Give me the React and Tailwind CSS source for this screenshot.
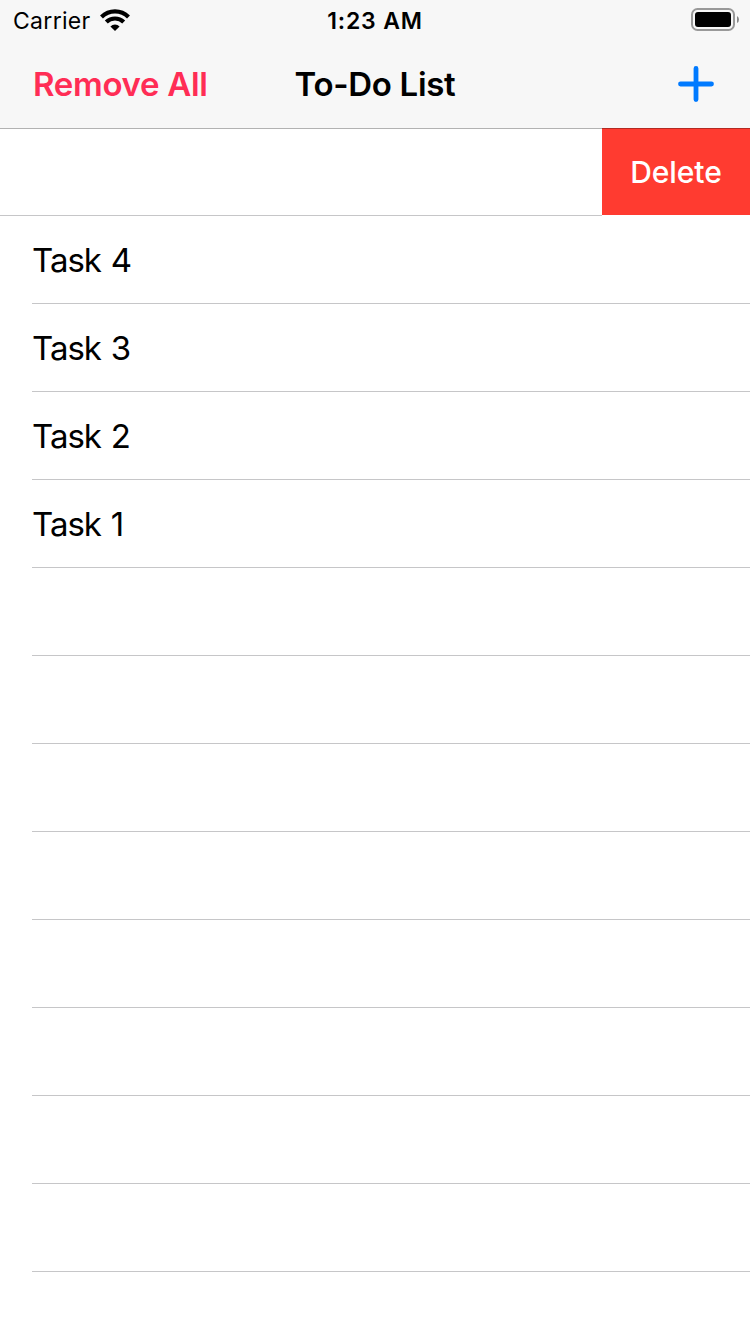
const tasks = ['Task 4', 'Task 3', 'Task 2', 'Task 1', '', '', '', '', '', '', '', ''];

export default function App() {
  return (
    <div className="flex h-[1334px] w-[750px] flex-col overflow-hidden bg-white font-['Inter',sans-serif] text-black">
      <header className="flex h-32 shrink-0 flex-col bg-[#f7f7f7]">
        <div className="grid h-10 grid-cols-3 items-center text-[23px] leading-[38px]">
          <div className="flex items-center pl-[13px]">
            <span className="pt-0.5 tracking-[0.3px]">Carrier</span>
            <svg className="ml-[9px] h-[22px] w-[30px]" viewBox="0 0 30 22" fill="none" stroke="black" strokeWidth="4.2">
              <path d="M1.500 7.900a19.500 19.500 0 0 1 27 0M6.300 13a12.500 12.500 0 0 1 17.400 0" />
              <path d="M15 22l-4.600-4.600a6.800 6.800 0 0 1 9.200 0z" fill="black" stroke="none" />
            </svg>
          </div>
          <span className="pt-0.5 text-center font-[560] tracking-[0.8px]">1:23 AM</span>
          <div className="flex justify-end pr-[11px]">
            <svg className="h-6 w-12" viewBox="0 0 48 24">
              <rect x="1" y="1" width="42" height="21" rx="5.500" fill="none" stroke="#999" strokeWidth="2" />
              <rect x="4" y="4" width="36" height="15" rx="3" />
              <path d="M46 8q2 1 2 3.500t-2 3.500z" fill="#888" />
            </svg>
          </div>
        </div>
        <div className="grid flex-1 grid-cols-3 items-center text-[33px] font-[590] tracking-[-0.3px]">
          <span className="pt-0.5 pl-[33px] text-[#ff2d55]">Remove All</span>
          <span className="pt-0.5 text-center">To-Do List</span>
          <div className="flex justify-end pr-9">
            <svg className="h-9 w-9" viewBox="0 0 36 36" stroke="#007aff" strokeWidth="4.8" strokeLinecap="round">
              <path d="M18 2.500v31M2.500 18h31" />
            </svg>
          </div>
        </div>
      </header>
      <main>
        <div className="flex h-[88px]">
          <div className="flex-1 border-t border-b border-t-[#b2b2b2] border-b-[#c6c6c8]" />
          <button className="h-[87px] w-[148px] border-t border-[#b32a22] bg-[#ff3b30] pt-px text-[30px] font-[450] tracking-[-0.1px] text-white">Delete</button>
        </div>
        {tasks.map((task, i) => (
          <div key={i} className="ml-8 flex h-[88px] items-center border-b border-[#c6c6c8] pt-[3px] text-[33px] tracking-[-1px] [word-spacing:1.5px]">
            <span>{task}</span>
          </div>
        ))}
      </main>
    </div>
  );
}
